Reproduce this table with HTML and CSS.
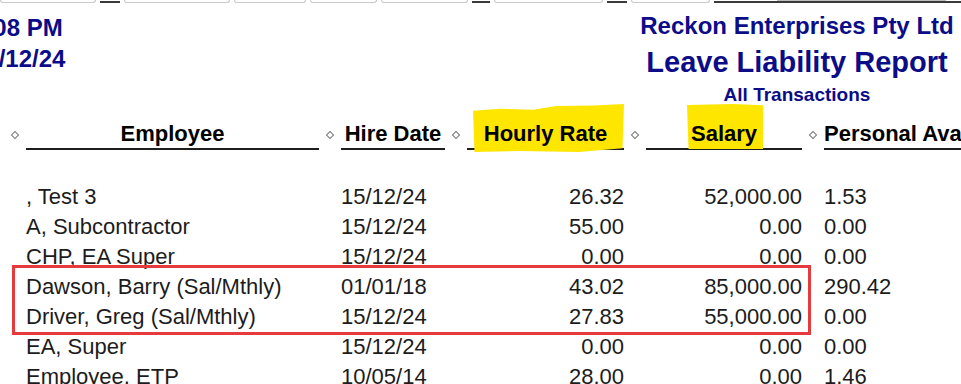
FILE: index.html
```html
<!DOCTYPE html>
<html lang="en">
<head>
<meta charset="utf-8">
<title>Leave Liability Report</title>
<link rel="stylesheet" href="styles.css">
</head>
<body>
<div class="toolbar-edge">
  <span class="tb-box w96"></span>
  <span class="tb-line w20"></span>
  <span class="tb-box w106"></span>
  <span class="tb-box w72"></span>
  <span class="tb-box w67"></span>
  <span class="tb-box w86"></span>
  <span class="tb-line w22"></span>
  <span class="tb-box w108"></span>
  <span class="tb-line w20"></span>
  <span class="tb-box w78"></span>
  <span class="tb-line grow"><span class="tb-thumb"></span></span>
</div>

<header class="report-head">
  <div class="stamp">
    <div>3:08 PM</div>
    <div>15/12/24</div>
  </div>
  <div class="titles">
    <div class="company">Reckon Enterprises Pty Ltd</div>
    <div class="report-name">Leave Liability Report</div>
    <div class="period">All Transactions</div>
  </div>
</header>

<div class="report">
  <div class="row head">
    <div class="sep first"><i class="dia"></i></div>
    <div class="col c-emp">Employee</div>
    <div class="sep"><i class="dia"></i></div>
    <div class="col c-hire">Hire Date</div>
    <div class="sep"><i class="dia"></i></div>
    <div class="col c-rate"><span class="mark mark-rate"></span><span class="lbl">Hourly Rate</span></div>
    <div class="sep"><i class="dia"></i></div>
    <div class="col c-sal"><span class="mark mark-sal"></span><span class="lbl">Salary</span></div>
    <div class="sep"><i class="dia"></i></div>
    <div class="col c-pers">Personal Available</div>
  </div>

  <div class="body">
    <div class="row"><div></div><div class="t-emp">, Test 3</div><div></div><div class="t-hire">15/12/24</div><div></div><div class="t-num">26.32</div><div></div><div class="t-num">52,000.00</div><div></div><div class="t-pers">1.53</div></div>
    <div class="row"><div></div><div class="t-emp">A, Subcontractor</div><div></div><div class="t-hire">15/12/24</div><div></div><div class="t-num">55.00</div><div></div><div class="t-num">0.00</div><div></div><div class="t-pers">0.00</div></div>
    <div class="row"><div></div><div class="t-emp">CHP, EA Super</div><div></div><div class="t-hire">15/12/24</div><div></div><div class="t-num">0.00</div><div></div><div class="t-num">0.00</div><div></div><div class="t-pers">0.00</div></div>
    <div class="flagged">
      <div class="row"><div></div><div class="t-emp">Dawson, Barry (Sal/Mthly)</div><div></div><div class="t-hire">01/01/18</div><div></div><div class="t-num">43.02</div><div></div><div class="t-num">85,000.00</div><div></div><div class="t-pers">290.42</div></div>
      <div class="row"><div></div><div class="t-emp">Driver, Greg (Sal/Mthly)</div><div></div><div class="t-hire">15/12/24</div><div></div><div class="t-num">27.83</div><div></div><div class="t-num">55,000.00</div><div></div><div class="t-pers">0.00</div></div>
    </div>
    <div class="row"><div></div><div class="t-emp">EA, Super</div><div></div><div class="t-hire">15/12/24</div><div></div><div class="t-num">0.00</div><div></div><div class="t-num">0.00</div><div></div><div class="t-pers">0.00</div></div>
    <div class="row"><div></div><div class="t-emp">Employee, ETP</div><div></div><div class="t-hire">10/05/14</div><div></div><div class="t-num">28.00</div><div></div><div class="t-num">0.00</div><div></div><div class="t-pers">1.46</div></div>
  </div>
</div>
</body>
</html>
```

FILE: styles.css
```css
html, body {
  margin: 0;
  padding: 0;
  background: #ffffff;
  overflow: hidden;
}
body {
  width: 961px;
  height: 384px;
  font-family: "Liberation Sans", Arial, sans-serif;
  color: #1c1c1c;
}

/* clipped toolbar edge at the very top */
.toolbar-edge {
  display: flex;
  align-items: flex-end;
  gap: 4px;
  height: 3px;
  overflow: hidden;
}
.tb-box {
  display: block;
  height: 3px;
  box-sizing: border-box;
  border: 1px solid #c9c9c9;
  border-top: none;
  border-radius: 0 0 4px 4px;
  flex: none;
}
.tb-line {
  display: block;
  height: 2px;
  background: #3a3a3a;
  flex: none;
  position: relative;
}
.tb-line.grow { flex: 1; margin-left: 0; }
.tb-thumb {
  position: absolute;
  left: 63px;
  width: 169px;
  top: -1px;
  height: 1px;
  background: #bdbdbd;
}
.w96 { width: 96px; }
.w20 { width: 20px; }
.w22 { width: 18px; }
.w106 { width: 106px; }
.w72 { width: 72px; }
.w67 { width: 67px; }
.w86 { width: 87px; }
.w108 { width: 109px; }
.w78 { width: 79px; }

/* report heading */
.report-head {
  display: flex;
  justify-content: space-between;
  margin-top: 8px;
  color: #0c0c88;
  font-weight: bold;
}
.stamp {
  margin-left: -28px;
  font-size: 24px;
  line-height: 31px;
  padding-top: 1px;
}
.titles {
  width: 330px;
  margin-right: -1px;
  text-align: center;
  padding-top: 0;
}
.company {
  font-size: 24px;
  line-height: 30px;
}
.report-name {
  font-size: 29px;
  line-height: 36px;
  margin-top: 3px;
}
.period {
  font-size: 19px;
  line-height: 22px;
  margin-top: 4px;
}

/* report grid */
.report {
  margin-top: 14px;
  width: 1008px;
}
.row {
  display: grid;
  grid-template-columns: 26px 293px 22px 104px 22px 157px 22px 156px 22px 184px;
  font-size: 22px;
  line-height: 30px;
  white-space: nowrap;
}
.row.head {
  font-weight: bold;
  color: #000;
  line-height: 28px;
}
.col {
  text-align: center;
  border-bottom: 2px solid #1e1e1e;
  position: relative;
}
.col .lbl { position: relative; }
.sep {
  display: flex;
  justify-content: center;
  align-items: flex-start;
  padding-top: 12px;
}
.sep.first {
  justify-content: flex-end;
  padding-right: 8px;
}
.dia {
  display: block;
  width: 4px;
  height: 4px;
  border: 1px solid #7a7a7a;
  background: #fff;
  transform: rotate(45deg);
}

/* highlighter marks (annotation layer) */
.mark {
  position: absolute;
  background: #ffe600;
  display: block;
}
.mark-rate {
  left: 6px;
  right: 0;
  top: -16px;
  bottom: -4px;
  clip-path: polygon(0 14%, 18% 10%, 40% 12%, 55% 4%, 80% 3%, 100% 0, 99% 92%, 70% 100%, 30% 98%, 1% 100%);
}
.mark-sal {
  left: 41px;
  width: 76px;
  top: -16px;
  bottom: -1px;
  clip-path: polygon(0 2%, 60% 0, 100% 3%, 100% 100%, 2% 100%);
}

.body {
  margin-top: 32px;
}
.t-emp { padding-left: 0; }
.t-hire { text-align: left; }
.t-num { text-align: right; }
.t-pers { padding-left: 0; }

/* red review box (annotation layer) */
.flagged {
  position: relative;
}
.flagged::after {
  content: "";
  position: absolute;
  left: 12px;
  width: 799px;
  top: -7px;
  height: 70px;
  box-sizing: border-box;
  border: 3px solid #e63a3c;
  pointer-events: none;
}
```
